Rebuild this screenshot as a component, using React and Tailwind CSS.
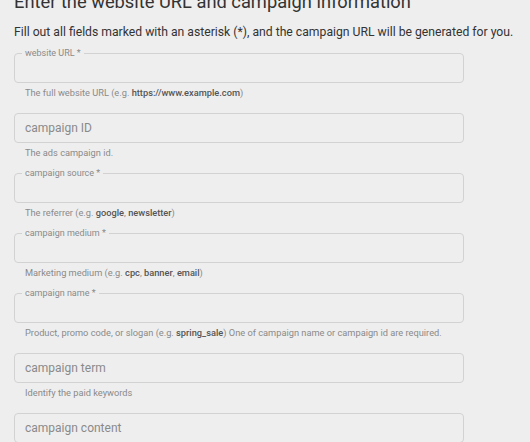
import React from "react";

const B = ({ children }) => <b className="font-medium text-[#555]">{children}</b>;

const fields = [
  {
    label: "website URL *",
    required: true,
    help: (
      <>
        The full website URL (e.g. <B>https://www.example.com</B>)
      </>
    ),
  },
  { label: "campaign ID", help: <>The ads campaign id.</> },
  {
    label: "campaign source *",
    required: true,
    help: (
      <>
        The referrer (e.g. <B>google</B>, <B>newsletter</B>)
      </>
    ),
  },
  {
    label: "campaign medium *",
    required: true,
    help: (
      <>
        Marketing medium (e.g. <B>cpc</B>, <B>banner</B>, <B>email</B>)
      </>
    ),
  },
  {
    label: "campaign name *",
    required: true,
    help: (
      <>
        Product, promo code, or slogan (e.g. <B>spring_sale</B>) One of campaign name or campaign id are
        required.
      </>
    ),
  },
  { label: "campaign term", help: <>Identify the paid keywords</> },
  { label: "campaign content", help: <>Use to differentiate ads</> },
];

function Field({ label, required, help }) {
  return (
    <div className="mb-[14px]">
      <div className="relative h-[30px] w-[450px] rounded-[4px] border border-[#d2d2d2]">
        {required ? (
          <span className="absolute -top-[7px] left-[7px] bg-[#eeeeee] px-[3px] text-[9px] leading-[12px] text-[#8a8a8a]">
            {label}
          </span>
        ) : (
          <input
            className="h-full w-full bg-transparent px-[10px] text-[12px] text-[#333] outline-none placeholder:text-[#8a8a8a]"
            placeholder={label}
          />
        )}
      </div>
      <p className="mt-1 h-[12px] pl-[11px] text-[9.25px] leading-[12px] text-[#8a8a8a]">{help}</p>
    </div>
  );
}

export default function App() {
  return (
    <div
      className="h-[442px] overflow-hidden bg-[#eeeeee] pl-[14px]"
      style={{ fontFamily: "Roboto, 'Liberation Sans', sans-serif" }}
    >
      <h1 className="-mt-[9px] text-[18.3px] leading-[21px] text-[#333]">
        Enter the website URL and campaign information
      </h1>
      <p className="mt-3 text-[12.2px] leading-[16px] text-[#333]">
        Fill out all fields marked with an asterisk (*), and the campaign URL will be generated for you.
      </p>
      <div className="mt-[13px]">
        {fields.map((f) => (
          <Field key={f.label} {...f} />
        ))}
      </div>
    </div>
  );
}
